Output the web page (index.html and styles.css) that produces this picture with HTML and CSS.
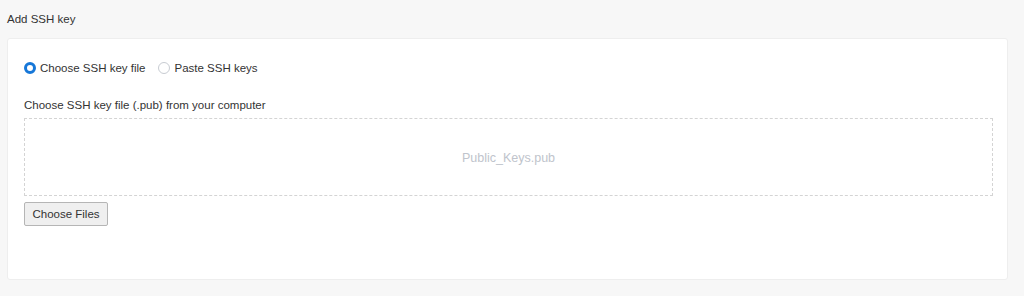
FILE: index.html
```html
<html>

<head>
	<link rel="stylesheet" href="styles.css">
</head>

<body>
	<div class="page">
		<div class="page-title">Add SSH key</div>
		<div class="card">
			<div class="radio-group">
				<label class="radio checked">
					<span class="radio-dot"></span>
					<span>Choose SSH key file</span>
				</label>
				<label class="radio">
					<span class="radio-dot"></span>
					<span>Paste SSH keys</span>
				</label>
			</div>
			<div class="field-label">Choose SSH key file (.pub) from your computer</div>
			<div class="drop-zone">Public_Keys.pub</div>
			<button class="file-button">Choose Files</button>
		</div>
	</div>
</body>

</html>
```

FILE: styles.css
```css
body {
	margin: 0;
	background: #f7f7f7;
	color: #333;
	font-family: "Liberation Sans", Arial, sans-serif;
	font-size: 11.5px;
}

.page {
	padding: 12px 16px 16px 7px;
}

.page-title {
	line-height: 14px;
	margin-bottom: 12px;
}

.card {
	background: #fff;
	border: 1px solid #eeeeee;
	border-radius: 3px;
	padding: 21px 14px 53px 16px;
}

.radio-group {
	display: flex;
	gap: 13px;
	height: 16px;
	align-items: center;
}

.radio {
	display: flex;
	align-items: center;
	gap: 4px;
}

.radio-dot {
	box-sizing: border-box;
	width: 12px;
	height: 12px;
	border-radius: 50%;
	border: 1px solid #c8ccd2;
	background: #fff;
}

.radio.checked .radio-dot {
	border: 3.5px solid #1677d8;
	background: #fff;
}

.field-label {
	margin-top: 22px;
	line-height: 14px;
}

.drop-zone {
	margin-top: 6px;
	height: 76px;
	padding-top: 2px;
	box-sizing: border-box;
	height: 78px;
	border: 1px dashed #d4d4d4;
	display: flex;
	align-items: center;
	justify-content: center;
	color: #c0c4cc;
	font-size: 12.5px;
}

.file-button {
	margin-top: 6px;
	height: 24px;
	width: 84px;
	padding: 0;
	font-family: inherit;
	font-size: 11.5px;
	color: #333;
	background: #efefef;
	border: 1px solid #b5b5b5;
	border-radius: 2px;
}
```
